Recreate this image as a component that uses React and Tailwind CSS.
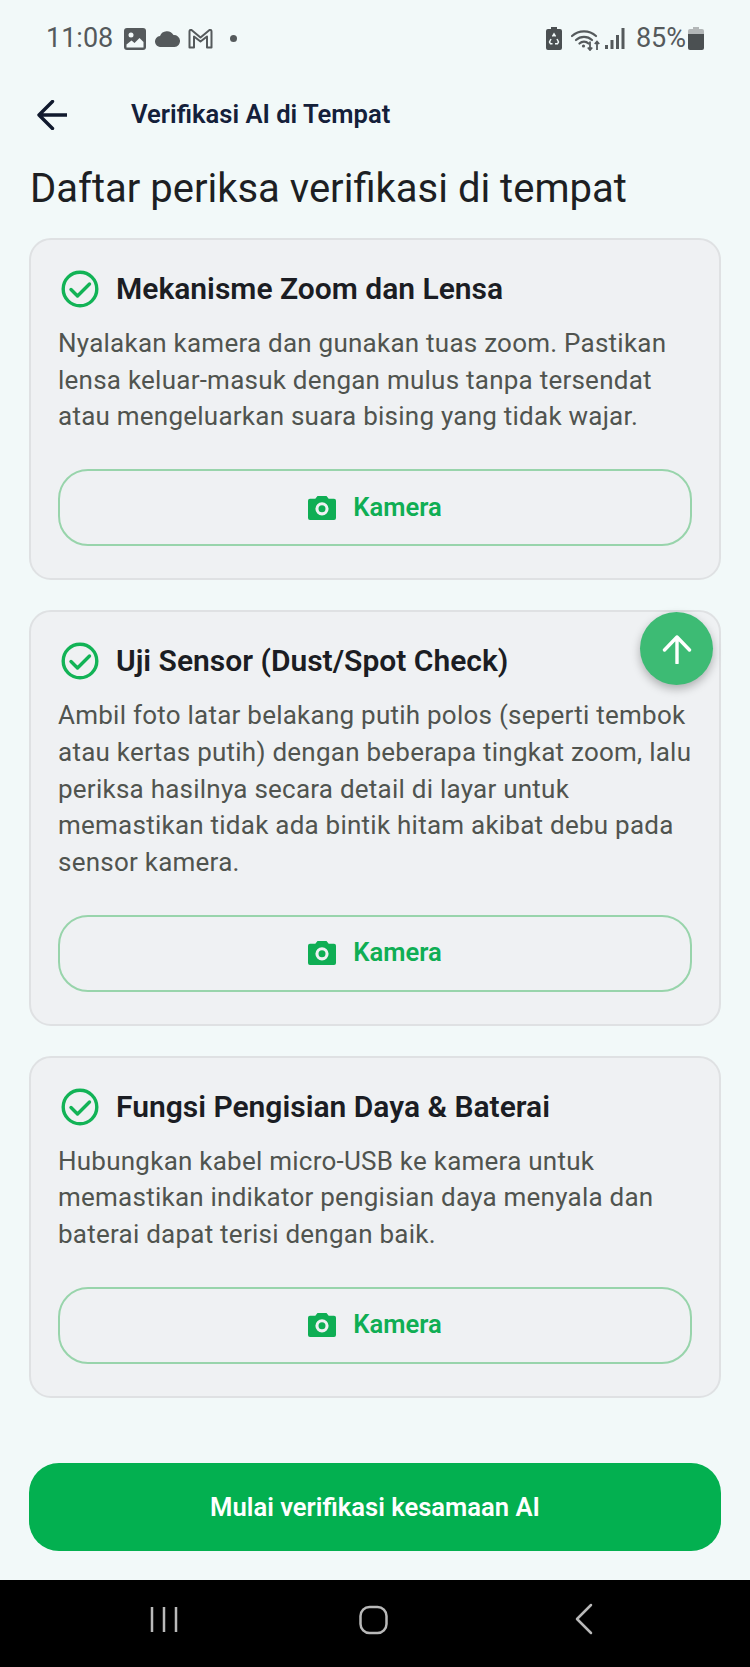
const cards = [
  {
    title: 'Mekanisme Zoom dan Lensa',
    lines: [
      'Nyalakan kamera dan gunakan tuas zoom. Pastikan',
      'lensa keluar-masuk dengan mulus tanpa tersendat',
      'atau mengeluarkan suara bising yang tidak wajar.',
    ],
  },
  {
    title: 'Uji Sensor (Dust/Spot Check)',
    lines: [
      'Ambil foto latar belakang putih polos (seperti tembok',
      'atau kertas putih) dengan beberapa tingkat zoom, lalu',
      'periksa hasilnya secara detail di layar untuk',
      'memastikan tidak ada bintik hitam akibat debu pada',
      'sensor kamera.',
    ],
  },
  {
    title: 'Fungsi Pengisian Daya & Baterai',
    lines: [
      'Hubungkan kabel micro-USB ke kamera untuk',
      'memastikan indikator pengisian daya menyala dan',
      'baterai dapat terisi dengan baik.',
    ],
  },
]

function CheckIcon() {
  return (
    <svg width="38" height="38" viewBox="0 0 38 38" fill="none" className="shrink-0">
      <circle cx="19" cy="19" r="16.8" stroke="#12b356" strokeWidth="3.4" />
      <path d="M10 19.500l6.500 6.500 12-12" stroke="#12b356" strokeWidth="3.4" strokeLinecap="round" strokeLinejoin="round" />
    </svg>
  )
}

function CameraIcon() {
  return (
    <svg width="28" height="26" viewBox="0 0 28 26" className="shrink-0">
      <path
        fillRule="evenodd"
        fill="#0fae54"
        d="M9.500 1h9l2.200 2.700H26a2 2 0 0 1 2 2V23a2 2 0 0 1-2 2H2a2 2 0 0 1-2-2V5.700a2 2 0 0 1 2-2h5.300zM14 7.200a6.600 6.600 0 1 0 0 13.200 6.600 6.600 0 0 0 0-13.200zm0 3.100a3.500 3.500 0 1 1 0 7 3.500 3.500 0 0 1 0-7z"
      />
    </svg>
  )
}

function StatusBar() {
  return (
    <div className="flex h-[76px] items-center justify-between pl-[46px] pr-[46px] pt-[1px] text-[#555a5c]">
      <div className="flex items-center">
        <span className="text-[27px] leading-none">11:08</span>
        <svg width="22" height="22" viewBox="0 0 22 22" className="ml-[11px]">
          <rect width="22" height="22" rx="3" fill="#555a5c" />
          <circle cx="7" cy="7" r="2.500" fill="#f2f9f9" />
          <path d="M2.500 19.500v-3l5-4 3 2.500 5-5 4 4v5.500z" fill="#f2f9f9" />
        </svg>
        <svg width="25" height="16" viewBox="0 0 25 16" className="ml-[9px]">
          <path d="M6 16a5.500 5.500 0 0 1-1-11A7.500 7.500 0 0 1 18.500 4 6 6 0 0 1 19.500 16z" fill="#555a5c" />
        </svg>
        <svg width="25" height="21" viewBox="0 0 25 21" fill="none" className="ml-[8px]">
          <path d="M1.500 19.500V3.500q0-2 2-1.500l9 7.500 9-7.500q2-.5 2 1.500v16h-4.500V8.500l-6.500 5-6.500-5v11z" stroke="#555a5c" strokeWidth="2" strokeLinejoin="round" />
        </svg>
        <span className="ml-[17px] h-[7px] w-[7px] rounded-full bg-[#555a5c]" />
      </div>
      <div className="flex items-center">
        <svg width="16" height="23" viewBox="0 0 16 23" className="mr-[9px]">
          <path d="M5 0h6v2h3a2 2 0 0 1 2 2v17a2 2 0 0 1-2 2H2a2 2 0 0 1-2-2V4a2 2 0 0 1 2-2h3z" fill="#4b5052" />
          <path d="M6.500 9.500L8 7l1.500 2.500M11 12l1.500 3-1 1.800H9M6.500 16.800h-2l-1-1.800L5 12" stroke="#f2f9f9" strokeWidth="1.500" fill="none" />
        </svg>
        <svg width="30" height="24" viewBox="0 0 30 24" fill="none" className="mr-[4px]">
          <path d="M1 9a18 18 0 0 1 24 0M5 13a12 12 0 0 1 16 0M8.500 16.500a6.500 6.500 0 0 1 9 0" stroke="#555a5c" strokeWidth="2.200" strokeLinecap="round" />
          <circle cx="12.500" cy="19" r="1.600" fill="#555a5c" />
          <path d="M19 14.500v8.500M16.800 20.500l2.200 2.500 2.200-2.500M26 23v-8.500M23.800 17l2.200-2.500 2.200 2.500" stroke="#555a5c" strokeWidth="1.800" />
        </svg>
        <svg width="20" height="21" viewBox="0 0 20 21" className="mr-[11px]">
          <rect x="0" y="17" width="3" height="4" fill="#555a5c" />
          <rect x="5.500" y="12" width="3" height="9" fill="#555a5c" />
          <rect x="11" y="7" width="3" height="14" fill="#555a5c" />
          <rect x="16.500" y="0" width="3" height="21" fill="#555a5c" />
        </svg>
        <span className="text-[27px] leading-none">85%</span>
        <svg width="16" height="23" viewBox="0 0 16 23" className="ml-[2px]">
          <path d="M5 0h6v2h3a2 2 0 0 1 2 2v3H0V4a2 2 0 0 1 2-2h3z" fill="#b3b7b8" />
          <path d="M0 7h16v14a2 2 0 0 1-2 2H2a2 2 0 0 1-2-2z" fill="#4b5052" />
        </svg>
      </div>
    </div>
  )
}

function ChecklistCard({ title, lines, children }) {
  return (
    <div className="relative rounded-[22px] border-2 border-[#dfe1e3] bg-[#eff1f3] px-[27px] pt-[30px] pb-[32px]">
      <div className="flex h-[38px] items-center pl-[3px]">
        <CheckIcon />
        <h2 className="ml-[17px] text-[30px] leading-none font-semibold text-[#1b1d23]">{title}</h2>
      </div>
      <div className="mt-[17px] text-[26px] leading-[36.7px] tracking-[0.24px] text-[#50544f]">
        {lines.map((line) => (
          <p key={line} className="whitespace-nowrap">{line}</p>
        ))}
      </div>
      <button
        type="button"
        className="mt-[34px] flex h-[77px] w-full items-center justify-center rounded-[30px] border-2 border-[#98d4ab]"
      >
        <CameraIcon />
        <span className="ml-[17px] text-[25.6px] leading-none font-semibold text-[#0fae54]">Kamera</span>
      </button>
      {children}
    </div>
  )
}

export default function App() {
  return (
    <div className="flex h-[1667px] w-[750px] flex-col bg-[#f2f9f9] font-['Roboto',sans-serif]">
      <StatusBar />
      <div className="flex h-[78px] items-center pl-[37px]">
        <svg width="30" height="30" viewBox="0 0 30 30" fill="none" stroke="#111a2e" strokeWidth="3.400">
          <path d="M15.500 1.500L2 15l13.500 13.500M2 15h27.500" strokeLinecap="round" strokeLinejoin="round" />
        </svg>
        <h1 className="ml-[64px] text-[25.6px] leading-none font-semibold text-[#14203a]">Verifikasi AI di Tempat</h1>
      </div>
      <h2 className="mt-[12px] pl-[30px] text-[40px] leading-[46px] text-[#1d1f23]">
        Daftar periksa verifikasi di tempat
      </h2>
      <div className="mt-[26px] flex flex-col gap-[30px] px-[29px]">
        {cards.map((card, i) => (
          <ChecklistCard key={card.title} title={card.title} lines={card.lines}>
            {i === 1 && (
              <button
                type="button"
                className="absolute top-[0px] right-[6px] flex h-[73px] w-[73px] items-center justify-center rounded-full bg-[#3dbb74] shadow-[0_4px_10px_rgba(0,0,0,0.28)]"
              >
                <svg width="30" height="30" viewBox="0 0 30 30" fill="none" stroke="#fff" strokeWidth="3.400">
                  <path d="M15 3v26M2.500 16L15 3l12.500 13" strokeLinecap="round" strokeLinejoin="round" />
                </svg>
              </button>
            )}
          </ChecklistCard>
        ))}
      </div>
      <div className="mt-[65px] px-[29px]">
        <button
          type="button"
          className="flex h-[88px] w-full items-center justify-center rounded-[30px] bg-[#03b050] text-[25.6px] font-semibold text-white"
        >
          Mulai verifikasi kesamaan AI
        </button>
      </div>
      <div className="mt-auto flex h-[87px] items-center bg-black">
        <svg width="750" height="87" viewBox="0 0 750 87" fill="none" stroke="#b9b9b9" strokeWidth="2.500">
          <path d="M152 27v25M164 27v25M176 27v25" />
          <rect x="360.500" y="27" width="26" height="26" rx="9" />
          <path d="M591 25l-14 14 14 14" strokeLinecap="round" strokeLinejoin="round" />
        </svg>
      </div>
    </div>
  )
}
